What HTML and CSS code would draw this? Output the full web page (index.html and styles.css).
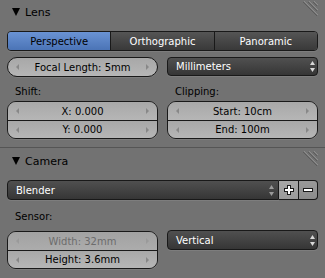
FILE: index.html
```html
<!DOCTYPE html>
<html lang="en">
<head>
    <meta charset="UTF-8">
    <meta name="viewport" content="width=device-width, initial-scale=1.0">
    <title>Camera Properties</title>
    <link rel="stylesheet" href="styles.css">
</head>
<body>
    <div class="panel">
        <div class="panel-head">
            <span class="tri"></span>Lens
            <svg class="grip" width="16" height="16" viewBox="0 0 16 16">
                <path d="M2 0 L16 14 M7 0 L16 9 M12 0 L16 4" stroke="#8e8e8e" stroke-width="1"/>
                <path d="M1 1 L15 15 M6 1 L15 10 M11 1 L15 5" stroke="#5c5c5c" stroke-width="1"/>
            </svg>
        </div>
        <div class="panel-body">
            <div class="radio-row">
                <div class="radio active">Perspective</div>
                <div class="radio">Orthographic</div>
                <div class="radio">Panoramic</div>
            </div>
            <div class="cols row-focal">
                <div class="num single">
                    <span class="arr-l"></span><span class="num-text">Focal Length: 5mm</span><span class="arr-r"></span>
                </div>
                <div class="menu">
                    <span class="menu-text">Millimeters</span>
                    <svg class="updown" width="5" height="11" viewBox="0 0 5 11"><path d="M2.5 0 L5 4 L0 4 Z M0 7 L5 7 L2.5 11 Z" fill="#d8d8d8"/></svg>
                </div>
            </div>
            <div class="cols">
                <div>
                    <div class="label label-shift">Shift:</div>
                    <div class="stack">
                        <div class="num"><span class="arr-l"></span><span class="num-text">X: 0.000</span><span class="arr-r"></span></div>
                        <div class="num"><span class="arr-l"></span><span class="num-text">Y: 0.000</span><span class="arr-r"></span></div>
                    </div>
                </div>
                <div>
                    <div class="label label-shift">Clipping:</div>
                    <div class="stack">
                        <div class="num"><span class="arr-l"></span><span class="num-text">Start: 10cm</span><span class="arr-r"></span></div>
                        <div class="num"><span class="arr-l"></span><span class="num-text">End: 100m</span><span class="arr-r"></span></div>
                    </div>
                </div>
            </div>
        </div>
    </div>

    <div class="sep"></div>

    <div class="panel">
        <div class="panel-head cam-head">
            <span class="tri"></span>Camera
            <svg class="grip" width="16" height="16" viewBox="0 0 16 16">
                <path d="M2 0 L16 14 M7 0 L16 9 M12 0 L16 4" stroke="#8e8e8e" stroke-width="1"/>
                <path d="M1 1 L15 15 M6 1 L15 10 M11 1 L15 5" stroke="#5c5c5c" stroke-width="1"/>
            </svg>
        </div>
        <div class="panel-body">
            <div class="preset-row">
                <div class="menu preset">
                    <span class="menu-text">Blender</span>
                    <svg class="updown" width="5" height="11" viewBox="0 0 5 11"><path d="M2.5 0 L5 4 L0 4 Z M0 7 L5 7 L2.5 11 Z" fill="#9a9a9a"/></svg>
                </div>
                <div class="tool plus">
                    <svg width="12" height="12" viewBox="0 0 12 12">
                        <path d="M6 1 V11 M1 6 H11" stroke="#1a1a1a" stroke-width="4"/>
                        <path d="M6 2 V10 M2 6 H10" stroke="#fff" stroke-width="2"/>
                    </svg>
                </div>
                <div class="tool minus">
                    <svg width="12" height="12" viewBox="0 0 12 12">
                        <path d="M1 6 H11" stroke="#1a1a1a" stroke-width="4"/>
                        <path d="M2 6 H10" stroke="#fff" stroke-width="2"/>
                    </svg>
                </div>
            </div>
            <div class="cols">
                <div>
                    <div class="label label-sensor">Sensor:</div>
                    <div class="stack">
                        <div class="num disabled"><span class="arr-l"></span><span class="num-text">Width: 32mm</span><span class="arr-r"></span></div>
                        <div class="num"><span class="arr-l"></span><span class="num-text">Height: 3.6mm</span><span class="arr-r"></span></div>
                    </div>
                </div>
                <div>
                    <div class="menu fit">
                        <span class="menu-text">Vertical</span>
                        <svg class="updown" width="5" height="11" viewBox="0 0 5 11"><path d="M2.5 0 L5 4 L0 4 Z M0 7 L5 7 L2.5 11 Z" fill="#d8d8d8"/></svg>
                    </div>
                </div>
            </div>
        </div>
    </div>
</body>
</html>
```

FILE: styles.css
```css
* {
    box-sizing: border-box;
}

body {
    margin: 0;
    width: 325px;
    height: 278px;
    overflow: hidden;
    background-color: #727272;
    font-family: "DejaVu Sans", sans-serif;
    font-size: 10px;
    color: #000;
}

.panel-head {
    height: 24px;
    display: flex;
    align-items: center;
    padding-left: 12px;
    font-size: 11px;
}

.cam-head {
    height: 26px;
}

.tri {
    width: 0;
    height: 0;
    border-left: 4px solid transparent;
    border-right: 4px solid transparent;
    border-top: 8px solid #000;
    margin-right: 5px;
}

.grip {
    margin-left: auto;
    margin-right: 7px;
    align-self: flex-start;
    margin-top: 1px;
}

.cam-head .grip {
    margin-top: 3px;
}

.panel-body {
    padding: 0 7px;
}

.sep {
    margin-top: 8px;
    height: 1px;
    background-color: #555;
}

/* radio row */
.radio-row {
    display: flex;
    height: 20px;
    margin-top: 7px;
    border: 1px solid #191919;
    border-radius: 4px;
    overflow: hidden;
    box-shadow: 0 1px 0 rgba(255, 255, 255, 0.08);
}

.radio {
    flex: 1;
    display: flex;
    align-items: center;
    justify-content: center;
    color: #fff;
    background: linear-gradient(#555, #393939);
    border-left: 1px solid #191919;
}

.radio:first-child {
    border-left: none;
}

.radio.active {
    color: #000;
    background: linear-gradient(#6a93d4, #4b74b6);
}

/* two columns */
.cols {
    display: grid;
    grid-template-columns: 151px 151px;
    column-gap: 9px;
}

.row-focal {
    margin-top: 6px;
}

/* number fields */
.num {
    height: 18px;
    display: flex;
    align-items: center;
    padding: 0 8px;
    background: linear-gradient(#a8a8a8, #b6b6b6);
    color: #000;
}

.num.single {
    height: 20px;
    border: 1px solid #191919;
    border-radius: 10px;
    box-shadow: 0 1px 0 rgba(255, 255, 255, 0.08);
}

.num-text {
    flex: 1;
    text-align: center;
}

.arr-l,
.arr-r {
    width: 0;
    height: 0;
    border-top: 3px solid transparent;
    border-bottom: 3px solid transparent;
}

.arr-l {
    border-right: 3px solid #888;
}

.arr-r {
    border-left: 3px solid #888;
}

.num.disabled {
    color: #6c6c6c;
    background: linear-gradient(#a2a2a2, #acacac);
}

.num.disabled .arr-l {
    border-right-color: #9a9a9a;
}

.num.disabled .arr-r {
    border-left-color: #9a9a9a;
}

.stack {
    border: 1px solid #191919;
    border-radius: 9px;
    overflow: hidden;
    box-shadow: 0 1px 0 rgba(255, 255, 255, 0.08);
}

.stack .num + .num {
    border-top: 1px solid #191919;
}

.label {
    padding-left: 8px;
    line-height: 14px;
}

.label-shift {
    height: 24px;
    padding-top: 8px;
}

.label-sensor {
    height: 31px;
    padding-top: 10px;
}

/* menus */
.menu {
    height: 19px;
    display: flex;
    align-items: center;
    padding: 0 2px 0 8px;
    color: #fff;
    background: linear-gradient(#505050, #363636);
    border: 1px solid #191919;
    border-radius: 4px;
    box-shadow: 0 1px 0 rgba(255, 255, 255, 0.08);
}

.menu-text {
    flex: 1;
}

.fit {
    margin-top: 30px;
    height: 20px;
}

.preset-row {
    display: flex;
    height: 20px;
    margin-top: 6px;
}

.preset {
    flex: 1;
    height: 20px;
    padding-right: 4px;
    border-radius: 4px 0 0 4px;
}

.tool {
    width: 20px;
    display: flex;
    align-items: center;
    justify-content: center;
    border: 1px solid #191919;
    border-left: none;
}

.plus {
    background: linear-gradient(#a6a6a6, #9a9a9a);
}

.minus {
    width: 19px;
    background: linear-gradient(#999, #8c8c8c);
    border-radius: 0 4px 4px 0;
}
```
